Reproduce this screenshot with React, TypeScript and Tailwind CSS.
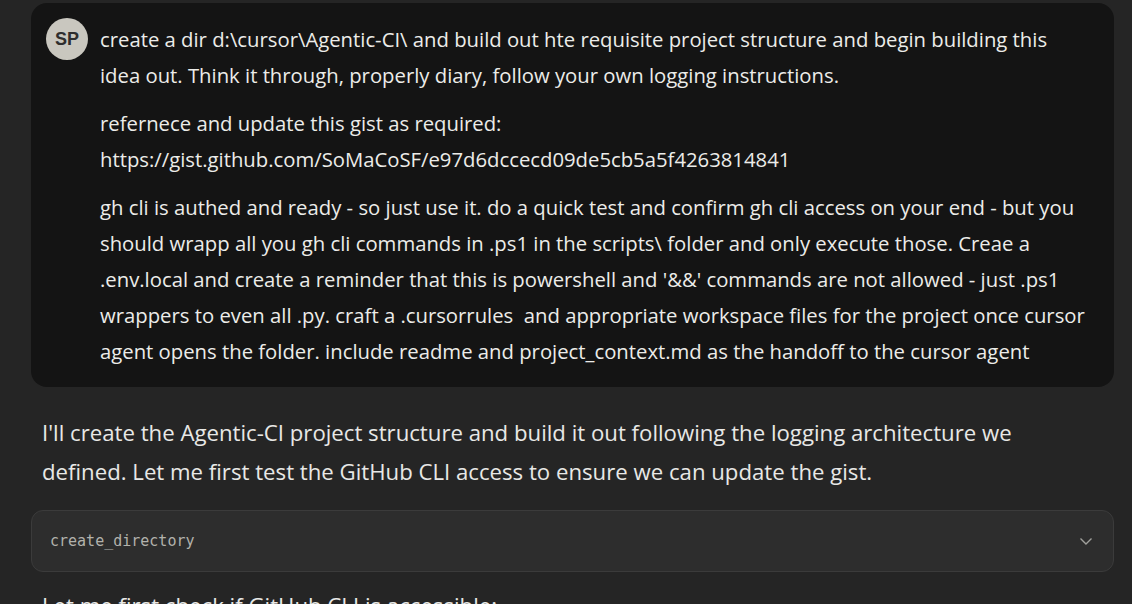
import React from "react";

export default function App() {
  const sans = { fontFamily: '"Open Sans", "Noto Sans", sans-serif' };
  return (
    <div className="w-[1132px] h-[604px] overflow-hidden bg-[#252525] pl-[31px] pr-[18px] pt-[3px]" style={sans}>
      <div className="flex gap-[12px] rounded-[16px] bg-[#141414] pl-[15px] pr-[20px] pt-[15px] pb-[18px]">
        <div className="flex h-[42px] w-[42px] shrink-0 items-center justify-center rounded-full bg-[#c9c7bf] text-[18px] font-bold text-[#2e2e2e]" style={{ fontFamily: '"Liberation Sans", Arial, sans-serif' }}>
          SP
        </div>
        <div className="flex flex-col gap-[12px] pt-[3px] text-[20.3px] leading-[36px] text-[#ecece9] whitespace-nowrap">
          <p>
            create a dir d:\cursor\Agentic-CI\ and build out hte requisite project structure and begin building this
            <br />
            idea out. Think it through, properly diary, follow your own logging instructions.
          </p>
          <p>
            refernece and update this gist as required:
            <br />
            https://gist.github.com/SoMaCoSF/e97d6dccecd09de5cb5a5f4263814841
          </p>
          <p>
            gh cli is authed and ready - so just use it. do a quick test and confirm gh cli access on your end - but you
            <br />
            should wrapp all you gh cli commands in .ps1 in the scripts\ folder and only execute those. Creae a
            <br />
            .env.local and create a reminder that this is powershell and '&amp;&amp;' commands are not allowed - just .ps1
            <br />
            wrappers to even all .py. craft a .cursorrules&nbsp; and appropriate workspace files for the project once cursor
            <br />
            agent opens the folder. include readme and project_context.md as the handoff to the cursor agent
          </p>
        </div>
      </div>
      <p className="mt-[26px] pl-[11px] text-[22.2px] leading-[39px] text-[#e8e8e6] whitespace-nowrap">
        I'll create the Agentic-CI project structure and build it out following the logging architecture we
        <br />
        defined. Let me first test the GitHub CLI access to ensure we can update the gist.
      </p>
      <div className="mt-[19px] flex h-[62px] items-center justify-between rounded-[12px] border border-[#3b3b3b] bg-[#2d2d2d] pl-[18px] pr-[19px]">
        <span className="text-[15px] font-medium text-[#b2b2ac]" style={{ fontFamily: '"DejaVu Sans Mono", monospace' }}>
          create_directory
        </span>
        <svg width="16" height="16" viewBox="0 0 16 16" fill="none" stroke="#a0a09c" strokeWidth="1.4">
          <path d="M2.5 5.5l5.5 5.5 5.5-5.5" />
        </svg>
      </div>
      <p className="mt-[14px] pl-[11px] text-[22.2px] leading-[39px] text-[#e8e8e6] whitespace-nowrap">
        Let me first check if GitHub CLI is accessible:
      </p>
    </div>
  );
}
